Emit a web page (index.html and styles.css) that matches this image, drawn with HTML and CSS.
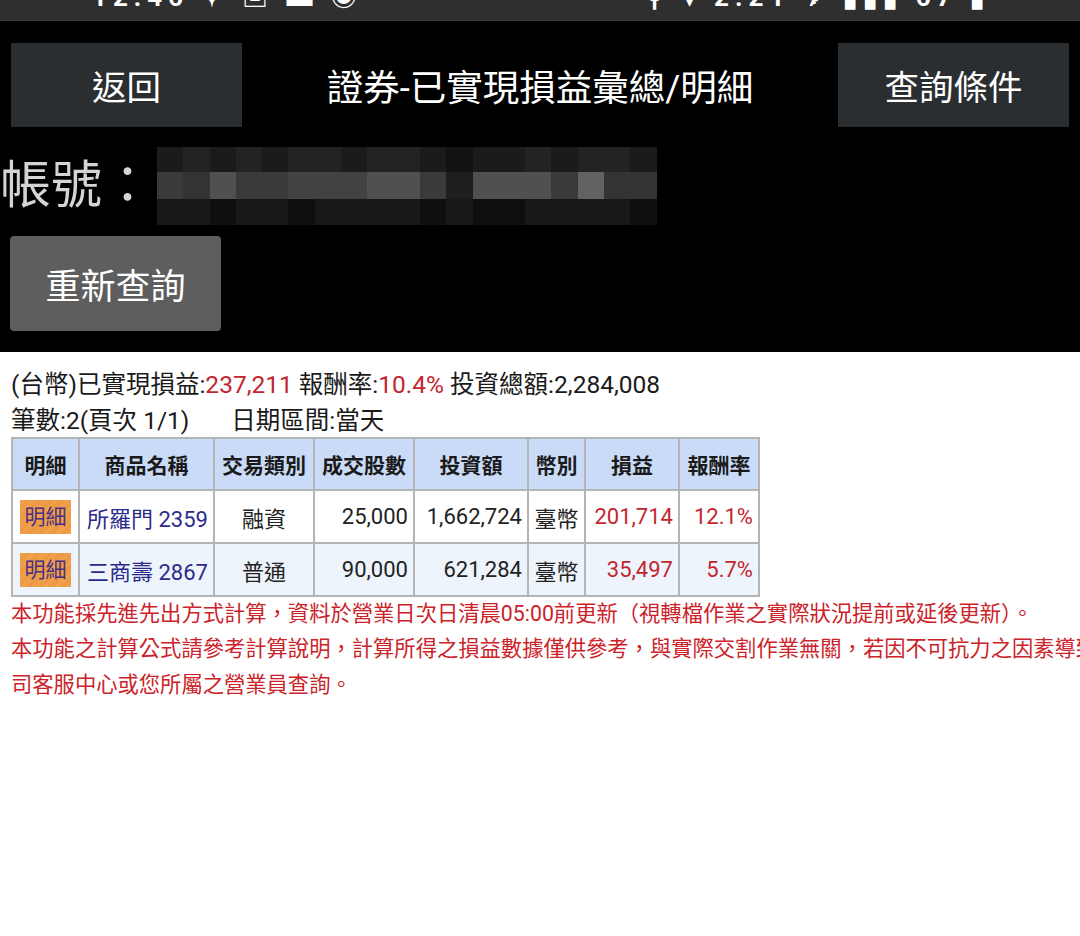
FILE: index.html
```html
<!DOCTYPE html>
<html lang="zh-Hant">
<head>
<meta charset="utf-8">
<title>證券-已實現損益彙總/明細</title>
<link rel="stylesheet" href="styles.css">
</head>
<body>
<div class="status"><span class="status-left">12:46 ✦ ▣ ▬ ◉</span><span class="status-right">⚲ ▾ 2.21 ✈ ▮▮▮ 67 ▮</span></div>
<header class="top">
  <div class="toolbar">
    <button class="tb-btn">返回</button>
    <div class="title">證券-已實現損益彙總/明細</div>
    <button class="tb-btn">查詢條件</button>
  </div>
  <div class="account">
    <span class="acc-label">帳號：</span>
    <div class="mosaic">
      <i class="t1"></i><i class="t2"></i><i class="t1"></i><i class="t2"></i><i class="t1"></i><i class="t2"></i><i class="t2"></i><i class="t1"></i><i class="t2"></i><i class="t2"></i><i class="t1"></i><i class="t3"></i><i class="t1"></i><i class="t1"></i><i class="t2"></i><i class="t1"></i><i class="t2"></i><i class="t2"></i><i class="t1"></i>
      <i class="m2"></i><i class="m1"></i><i class="m4"></i><i class="m2"></i><i class="m2"></i><i class="m3"></i><i class="m3"></i><i class="m3"></i><i class="m4"></i><i class="m4"></i><i class="m2"></i><i class="m0"></i><i class="m4"></i><i class="m4"></i><i class="m4"></i><i class="m2"></i><i class="m5"></i><i class="m1"></i><i class="m1"></i>
      <i class="b1"></i><i class="b1"></i><i class="b0"></i><i class="b1"></i><i class="b1"></i><i class="b0"></i><i class="b1"></i><i class="b1"></i><i class="b1"></i><i class="b1"></i><i class="b0"></i><i class="b1"></i><i class="b0"></i><i class="b0"></i><i class="b1"></i><i class="b1"></i><i class="b1"></i><i class="b1"></i><i class="b0"></i>
    </div>
  </div>
  <button class="requery">重新查詢</button>
</header>
<main class="content">
  <div class="summary">
    <div>(台幣)已實現損益:<span class="red">237,211</span> 報酬率:<span class="red">10.4%</span> 投資總額:2,284,008</div>
    <div>筆數:2(頁次 1/1)<span class="gap"></span>日期區間:當天</div>
  </div>
  <table class="grid">
    <colgroup>
      <col class="c1"><col class="c2"><col class="c3"><col class="c4"><col class="c5"><col class="c6"><col class="c7"><col class="c8">
    </colgroup>
    <thead>
      <tr><th>明細</th><th>商品名稱</th><th>交易類別</th><th>成交股數</th><th>投資額</th><th>幣別</th><th>損益</th><th>報酬率</th></tr>
    </thead>
    <tbody>
      <tr>
        <td class="ctr"><span class="detail">明細</span></td>
        <td class="name">所羅門 2359</td>
        <td class="ctr">融資</td>
        <td class="num">25,000</td>
        <td class="num">1,662,724</td>
        <td class="ctr">臺幣</td>
        <td class="num red">201,714</td>
        <td class="num red">12.1%</td>
      </tr>
      <tr class="alt">
        <td class="ctr"><span class="detail">明細</span></td>
        <td class="name">三商壽 2867</td>
        <td class="ctr">普通</td>
        <td class="num">90,000</td>
        <td class="num">621,284</td>
        <td class="ctr">臺幣</td>
        <td class="num red">35,497</td>
        <td class="num red">5.7%</td>
      </tr>
    </tbody>
  </table>
  <div class="notes">
    <div>本功能採先進先出方式計算，資料於營業日次日清晨05:00前更新（視轉檔作業之實際狀況提前或延後更新）。</div>
    <div>本功能之計算公式請參考計算說明，計算所得之損益數據僅供參考，與實際交割作業無關，若因不可抗力之因素導致資料有誤，請洽本公</div>
    <div>司客服中心或您所屬之營業員查詢。</div>
  </div>
</main>
</body>
</html>
```
FILE: styles.css
```css
html, body {
  margin: 0;
  padding: 0;
  background: #ffffff;
  overflow: hidden;
  width: 1080px;
  height: 936px;
}
body {
  font-family: Roboto, "Noto Sans CJK TC", "Noto Sans", sans-serif;
  color: #1a1a1a;
}
.status {
  height: 20px;
  background: #2f2f2f;
  border-bottom: 1px solid #3a3a3a;
  display: flex;
  justify-content: space-between;
  overflow: hidden;
  color: #ffffff;
  font-size: 26px;
  font-weight: 700;
  line-height: 26px;
  padding: 0 90px 0 92px;
}
.status-left, .status-right {
  margin-top: -16px;
  letter-spacing: 6px;
}
.top {
  background: #000000;
  padding: 22px 0 21px 0;
}
.toolbar {
  display: flex;
  align-items: center;
  padding: 0 11px;
}
.tb-btn {
  width: 231px;
  height: 84px;
  background: #2b2e31;
  border: none;
  color: #ffffff;
  font-family: Roboto, "Noto Sans CJK TC", sans-serif;
  font-size: 34.5px;
  padding: 0;
}
.title {
  flex: 1;
  text-align: center;
  color: #ffffff;
  font-size: 36.5px;
}
.account {
  display: flex;
  align-items: center;
  margin-top: 20px;
  height: 78px;
}
.acc-label {
  color: #d4d4d4;
  font-size: 51px;
  line-height: 78px;
  width: 157px;
}
.mosaic {
  display: grid;
  grid-template-columns: repeat(19, 26.3px);
  grid-template-rows: 25px 27px 26px;
}
.mosaic i { display: block; }
.t1 { background: #1b1b1b; }
.t2 { background: #232323; }
.t3 { background: #121212; }
.m0 { background: #1e1e1e; }
.m1 { background: #333333; }
.m2 { background: #3a3a3a; }
.m3 { background: #424242; }
.m4 { background: #505050; }
.m5 { background: #626262; }
.b0 { background: #0f0f0f; }
.b1 { background: #181818; }
.requery {
  display: block;
  margin: 11px 0 0 10px;
  width: 211px;
  height: 95px;
  background: #5e5e5e;
  border: none;
  border-radius: 4px;
  color: #ffffff;
  font-family: Roboto, "Noto Sans CJK TC", sans-serif;
  font-size: 35px;
  padding: 0;
}
.content {
  padding: 15px 0 0 11px;
}
.summary {
  font-size: 24.5px;
  line-height: 36px;
  color: #1a1a1a;
  white-space: nowrap;
}
.red { color: #c3262e; }
.gap {
  display: inline-block;
  width: 42px;
}
.grid {
  border-collapse: collapse;
  border: 2px solid #a6a6a6;
  margin-top: -2px;
}
.grid th, .grid td {
  border: 2px solid #b4b4b4;
  padding: 0 5px;
  white-space: nowrap;
}
.grid th {
  background: #c9dbf7;
  height: 50px;
  font-size: 21px;
  font-weight: 700;
  color: #1a1a1a;
  text-align: center;
}
.grid td {
  height: 51px;
  font-size: 22px;
  background: #ffffff;
  color: #222222;
}
.grid tr.alt td { background: #eef4fc; }
.c1 { width: 67px; }
.c2 { width: 133px; }
.c3 { width: 100px; }
.c4 { width: 100px; }
.c5 { width: 114px; }
.c6 { width: 57px; }
.c7 { width: 94px; }
.c8 { width: 80px; }
.ctr { text-align: center; }
.num { text-align: right; }
.grid td.name { color: #2b2b8c; padding-left: 7px; }
.grid td.red { color: #c3262e; }
.detail {
  display: inline-block;
  width: 51px;
  height: 34px;
  line-height: 34px;
  background: repeating-linear-gradient(135deg, #f0a04c 0 4px, #ec9a44 4px 8px);
  color: #4a2f86;
  font-size: 21px;
  text-align: center;
  vertical-align: middle;
}
.notes {
  color: #cc2229;
  font-size: 21.3px;
  line-height: 35.3px;
  white-space: nowrap;
  margin-top: -1px;
}
```
